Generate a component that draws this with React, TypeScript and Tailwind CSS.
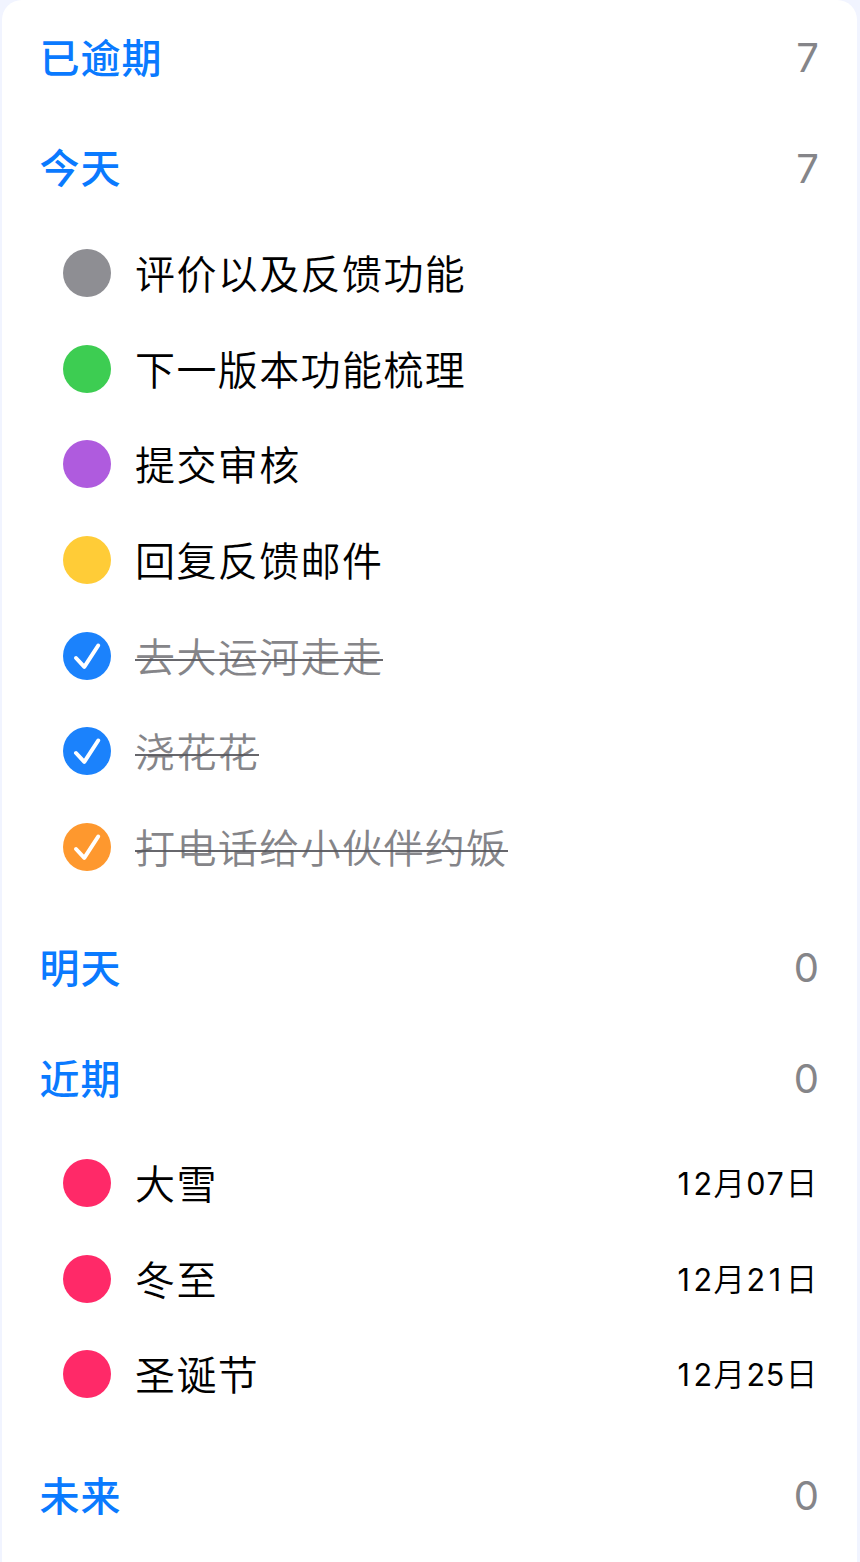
type Task = { title: string; color: string; done?: boolean; date?: string };
type Section = { title: string; count: number; tasks?: Task[] };

const sections: Section[] = [
  { title: "已逾期", count: 7 },
  {
    title: "今天",
    count: 7,
    tasks: [
      { title: "评价以及反馈功能", color: "bg-[#8e8e93]" },
      { title: "下一版本功能梳理", color: "bg-[#3dcd52]" },
      { title: "提交审核", color: "bg-[#af5bde]" },
      { title: "回复反馈邮件", color: "bg-[#ffcc37]" },
      { title: "去大运河走走", color: "bg-[#1b82fc]", done: true },
      { title: "浇花花", color: "bg-[#1b82fc]", done: true },
      { title: "打电话给小伙伴约饭", color: "bg-[#fe982e]", done: true },
    ],
  },
  { title: "明天", count: 0 },
  {
    title: "近期",
    count: 0,
    tasks: [
      { title: "大雪", color: "bg-[#ff2968]", date: "12月07日" },
      { title: "冬至", color: "bg-[#ff2968]", date: "12月21日" },
      { title: "圣诞节", color: "bg-[#ff2968]", date: "12月25日" },
    ],
  },
  { title: "未来", count: 0 },
];

function Check() {
  return (
    <svg viewBox="0 0 48 48" className="size-12" fill="none" stroke="white" strokeWidth="4" strokeLinecap="round" strokeLinejoin="round">
      <path d="M13 26L21.3 34.8L35.2 13.5" />
    </svg>
  );
}

// Every digit gets an equal cell so that the dates line up in columns.
function DateLabel({ date }: { date: string }) {
  return (
    <span className="ml-auto flex items-baseline pt-[2px] text-[30.5px] leading-[46px] whitespace-nowrap text-black">
      {[...date].map((char, i) => (
        <span
          key={i}
          className={/\d/.test(char) ? "flex w-[19.2px] justify-center" : "flex w-[33.8px] justify-center text-[31.5px] font-[350]"}
        >
          {char}
        </span>
      ))}
    </span>
  );
}

function TaskRow({ title, color, done, date }: Task) {
  return (
    <li className="flex h-[95.65px] items-center pr-[38.6px] pl-[61.5px]">
      <span className={`size-12 shrink-0 rounded-full ${color}`}>{done && <Check />}</span>
      <span className="relative ml-6 pt-[4px] text-[40px] leading-[60px] font-[350] tracking-[1.4px] whitespace-nowrap">
        <span className={done ? "text-[#858589]" : "text-black"}>{title}</span>
        {done && <span className="absolute inset-x-0 top-[35px] h-[2px] bg-[#56565c]/90" />}
      </span>
      {date && <DateLabel date={date} />}
    </li>
  );
}

export default function App() {
  return (
    <div className="flex h-[1562px] w-[860px] overflow-hidden bg-[#f1f4ff] pr-[3px] pl-[1.5px] font-['Inter','Noto_Sans_CJK_SC',sans-serif]">
      <main className="flex-1 rounded-t-[20px] bg-white pt-[2px]">
        {sections.map((section) => (
          <section key={section.title}>
            <header className="flex h-[110.6px] items-center justify-between pr-[38px] pl-[38px]">
              <h2 className="pt-[3px] text-[40px] leading-[60px] font-medium tracking-[1px] text-[#0a7aff]">{section.title}</h2>
              <span className="pt-[2px] text-[40px] leading-[60px] font-[370] text-[#858589]">{section.count}</span>
            </header>
            {section.tasks && (
              <ul className="pt-[2px] pb-[17.5px]">
                {section.tasks.map((task) => (
                  <TaskRow key={task.title} {...task} />
                ))}
              </ul>
            )}
          </section>
        ))}
      </main>
    </div>
  );
}
